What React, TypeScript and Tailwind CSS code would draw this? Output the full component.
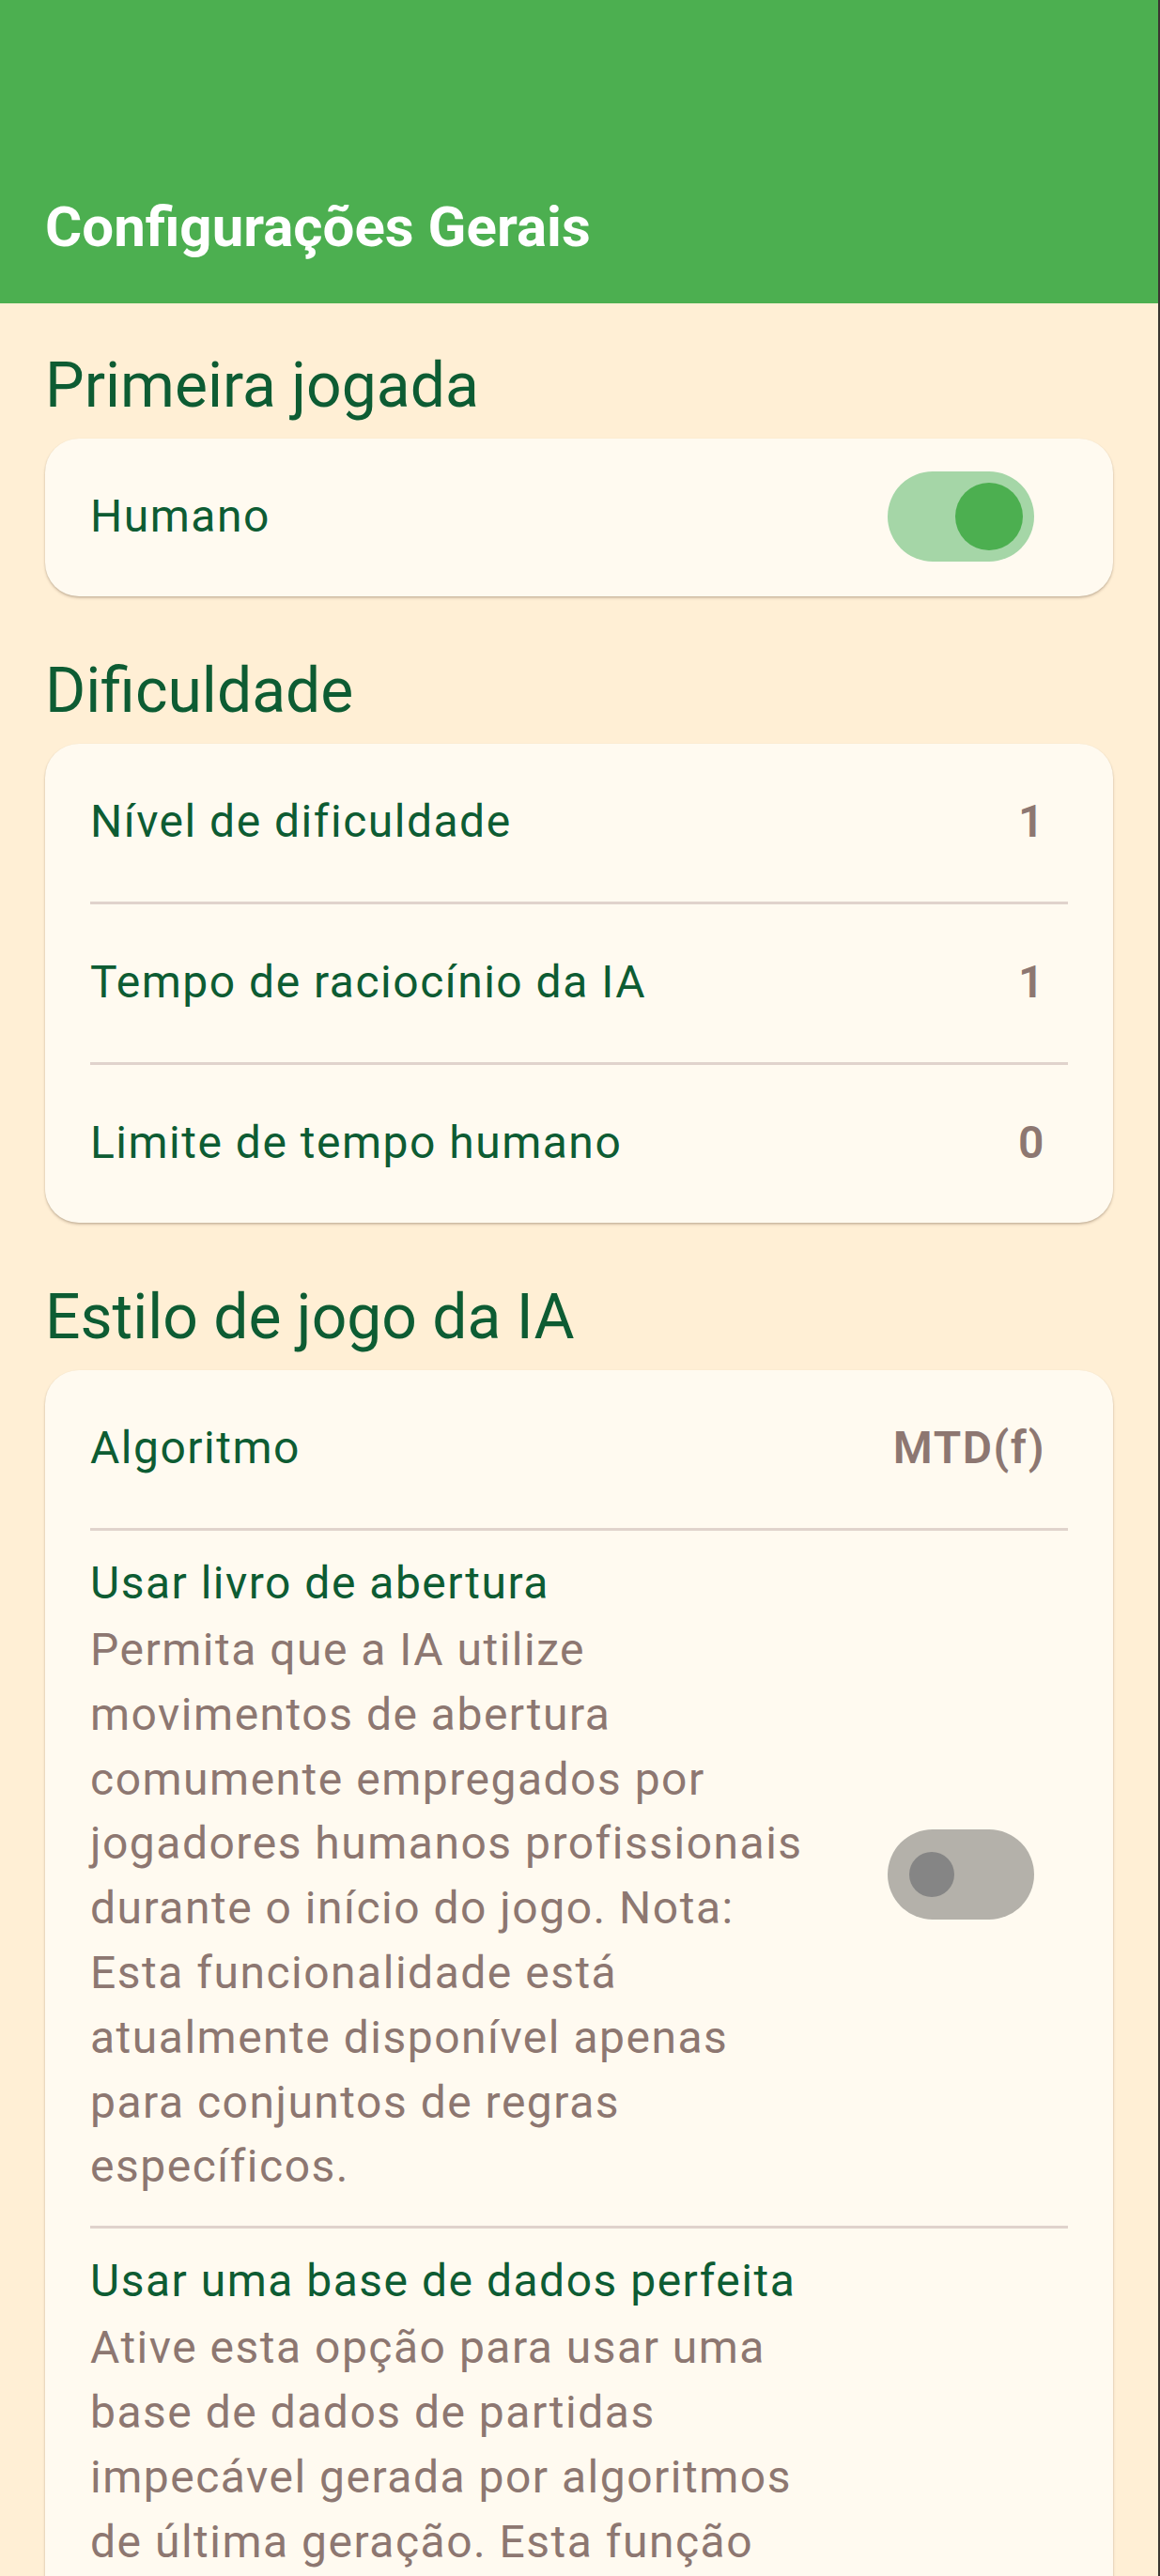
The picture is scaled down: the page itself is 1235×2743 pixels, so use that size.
import React from "react";

const bookLines = [
  "Permita que a IA utilize",
  "movimentos de abertura",
  "comumente empregados por",
  "jogadores humanos profissionais",
  "durante o início do jogo. Nota:",
  "Esta funcionalidade está",
  "atualmente disponível apenas",
  "para conjuntos de regras",
  "específicos.",
];

const databaseLines = [
  "Ative esta opção para usar uma",
  "base de dados de partidas",
  "impecável gerada por algoritmos",
  "de última geração. Esta função",
  "permite que a IA jogue de forma",
  "perfeita. Nota: Esta",
  "funcionalidade está atualmente",
  "disponível apenas para a regra",
  "padrão de Nove Homens e",
  "requer o arquivo da base de",
  "dados instalado no",
  "dispositivo.",
];

function Toggle({ on }: { on: boolean }) {
  if (on) {
    return (
      <div className="mr-[12px] flex h-[96px] w-[156px] shrink-0 items-center justify-end rounded-full bg-[#a5d6a7] pr-[12px]">
        <div className="h-[72px] w-[72px] rounded-full bg-[#4caf50]" />
      </div>
    );
  }
  return (
    <div className="mr-[12px] flex h-[96px] w-[156px] shrink-0 items-center rounded-full bg-[#b4b1aa] pl-[23px]">
      <div className="h-[48px] w-[48px] rounded-full bg-[#858585]" />
    </div>
  );
}

function SectionTitle({ children }: { children: React.ReactNode }) {
  return (
    <h2 className="mt-[48px] shrink-0 px-[48px] text-[66px] leading-[80px] text-[#0d5c33]">
      {children}
    </h2>
  );
}

function Card({ children }: { children: React.ReactNode }) {
  return (
    <div className="mx-[48px] mb-[13px] mt-[16px] shrink-0 overflow-hidden rounded-[36px] bg-[#fffaf0] shadow-[0_2px_3px_rgba(90,60,30,0.22),0_1px_2px_rgba(0,0,0,0.12)]">
      {children}
    </div>
  );
}

function Divider() {
  return <div className="mx-[48px] h-[3px] bg-[#e0d3cc]" />;
}

function Row({ label, children }: { label: string; children?: React.ReactNode }) {
  return (
    <div className="flex h-[168px] items-center justify-between pb-[2px] pl-[48px] pr-[72px]">
      <span className="text-[48px] tracking-[1.5px] text-[#0d5c33]">{label}</span>
      {children}
    </div>
  );
}

function Value({ children }: { children: React.ReactNode }) {
  return (
    <span className="text-[48px] font-semibold tracking-[1.5px] text-[#8d7771]">
      {children}
    </span>
  );
}

function LongRow({ title, lines, on }: { title: string; lines: string[]; on: boolean }) {
  return (
    <div className="flex items-center pb-[28px] pl-[48px] pr-[72px] pt-[19px]">
      <div className="min-w-0 flex-1">
        <p className="whitespace-nowrap text-[48px] leading-[74px] tracking-[1.5px] text-[#0d5c33]">
          {title}
        </p>
        <p className="text-[48px] leading-[68.8px] tracking-[1.5px] text-[#8d7771]">
          {lines.map((line) => (
            <span key={line} className="block whitespace-nowrap">
              {line}
            </span>
          ))}
        </p>
      </div>
      <Toggle on={on} />
    </div>
  );
}

export default function App() {
  return (
    <div className="flex h-[2743px] w-full overflow-hidden bg-[#ffefd5] font-['Roboto',sans-serif]">
      <main className="flex min-w-0 flex-1 flex-col">
        <header className="flex h-[323px] shrink-0 flex-col justify-end bg-[#4caf50] px-[48px] pb-[41px]">
          <h1 className="text-[60px] font-bold leading-[80px] text-white">Configurações Gerais</h1>
        </header>

        <SectionTitle>Primeira jogada</SectionTitle>
        <Card>
          <Row label="Humano">
            <Toggle on />
          </Row>
        </Card>

        <SectionTitle>Dificuldade</SectionTitle>
        <Card>
          <Row label="Nível de dificuldade">
            <Value>1</Value>
          </Row>
          <Divider />
          <Row label="Tempo de raciocínio da IA">
            <Value>1</Value>
          </Row>
          <Divider />
          <Row label="Limite de tempo humano">
            <Value>0</Value>
          </Row>
        </Card>

        <SectionTitle>Estilo de jogo da IA</SectionTitle>
        <Card>
          <Row label="Algoritmo">
            <Value>MTD(f)</Value>
          </Row>
          <Divider />
          <LongRow title="Usar livro de abertura" lines={bookLines} on={false} />
          <Divider />
          <LongRow title="Usar uma base de dados perfeita" lines={databaseLines} on={false} />
        </Card>
      </main>
      <div className="w-[2px] shrink-0 bg-[#3b3631]" />
    </div>
  );
}
